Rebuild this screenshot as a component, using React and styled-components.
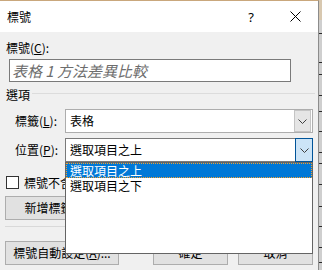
import React from 'react';
import styled, { createGlobalStyle } from 'styled-components';

const GlobalStyle = createGlobalStyle`
  html, body {
    margin: 0;
    padding: 0;
    background: #f0f0f0;
  }
`;

const Screen = styled.div`
  display: flex;
  width: 322px;
  height: 270px;
  overflow: hidden;
  font-family: 'Noto Sans CJK TC', 'Noto Sans', sans-serif;
  font-size: 12px;
  color: #000;
`;

const Dialog = styled.div`
  position: relative;
  display: flex;
  flex-direction: column;
  width: 319px;
  flex-shrink: 0;
  box-sizing: border-box;
  border-top: 1px solid #c9a77c;
  border-right: 1px solid #8c8c8c;
  background: #f0f0f0;
`;

const TitleBar = styled.div`
  display: flex;
  align-items: center;
  height: 31px;
  flex-shrink: 0;
  background: #ffffff;
`;

const Title = styled.span`
  flex: 1;
  padding-left: 7px;
  line-height: 14px;
`;

const TitleButton = styled.div`
  display: flex;
  align-items: center;
  justify-content: center;
  width: ${(p) => p.$w}px;
  height: 31px;
  font-family: 'Noto Sans', sans-serif;
  font-size: 13px;
`;

const Body = styled.div`
  display: flex;
  flex-direction: column;
  flex: 1;
  padding: 9px 5px 0 5px;
`;

const FieldLabel = styled.div`
  padding-left: 1px;
  line-height: 14px;
`;

const CaptionInput = styled.input`
  width: 282px;
  height: 23px;
  margin: 4px 0 0 4px;
  padding: 0 2px;
  box-sizing: border-box;
  border: 1px solid #7a7a7a;
  background: #ffffff;
  font-family: 'Noto Sans CJK TC', sans-serif;
  font-size: 15px;
  font-style: italic;
  outline: none;
  &::placeholder {
    color: #6d6d6d;
  }
`;

const GroupHeader = styled.div`
  display: flex;
  margin-top: 6px;
  line-height: 14px;
  padding-left: 1px;
`;

const GroupLine = styled.div`
  flex: 1;
  height: 1px;
  margin: 5px -2px 0 2px;
  background: #dcdcdc;
`;

const Row = styled.div`
  display: flex;
  align-items: center;
  margin-top: ${(p) => p.$top}px;
`;

const RowLabel = styled.span`
  width: 60px;
  padding-left: 10px;
  box-sizing: border-box;
  line-height: 14px;
`;

const Combo = styled.div`
  position: relative;
  display: flex;
  align-items: ${(p) => (p.$open ? 'stretch' : 'center')};
  flex: 1;
  height: 24px;
  box-sizing: border-box;
  border: 1px solid ${(p) => (p.$open ? '#7a7a7a' : '#adadad')};
  background: #ffffff;
`;

const ComboText = styled.span`
  flex: 1;
  align-self: center;
  padding-left: 4px;
  line-height: 14px;
`;

const ComboButton = styled.div`
  display: flex;
  align-items: center;
  justify-content: center;
  box-sizing: border-box;
  width: ${(p) => (p.$open ? 18 : 17)}px;
  height: ${(p) => (p.$open ? 24 : 22)}px;
  margin: ${(p) => (p.$open ? '-1px -1px -1px 0' : '0 1px 0 0')};
  background: ${(p) => (p.$open ? '#cce4f7' : '#e5e5e5')};
  border: 1px solid ${(p) => (p.$open ? '#005499' : '#c4c4c4')};
`;

const DropList = styled.div`
  position: absolute;
  top: calc(100% + 1px);
  left: -1px;
  right: -1px;
  z-index: 10;
  height: 92px;
  box-sizing: border-box;
  border: 1px solid #646464;
  background: #ffffff;
`;

const DropItem = styled.div`
  height: 15px;
  padding-left: 4px;
  line-height: 15px;
  color: ${(p) => (p.$selected ? '#ffffff' : '#000000')};
  background: ${(p) => (p.$selected ? '#0078d7' : 'transparent')};
  outline: ${(p) => (p.$selected ? '1px dotted #f0a030' : 'none')};
  outline-offset: -1px;
`;

const CheckRow = styled.label`
  display: flex;
  align-items: center;
  gap: 5px;
  margin-top: 14px;
  padding-left: 1px;
  line-height: 13px;
`;

const CheckBox = styled.span`
  width: 13px;
  height: 13px;
  box-sizing: border-box;
  border: 1px solid #333333;
  background: #ffffff;
`;

const ButtonRow = styled.div`
  display: flex;
  gap: 10px;
  margin-top: ${(p) => p.$top}px;
`;

const Button = styled.button`
  width: ${(p) => p.$w}px;
  height: 24px;
  padding: 0;
  margin-left: ${(p) => (p.$push ? 'auto' : '0')};
  box-sizing: border-box;
  border: 1px solid #adadad;
  background: #e1e1e1;
  font-family: 'Noto Sans CJK TC', sans-serif;
  font-size: 12px;
  line-height: 14px;
  color: #000;
  white-space: nowrap;
`;

const Separator = styled.div`
  height: 1px;
  margin-top: 6px;
  background: #d9d9d9;
`;

const EdgeStrip = styled.svg`
  display: block;
  flex-shrink: 0;
`;

const Chevron = () => (
  <svg width="9" height="5" viewBox="0 0 9 5">
    <polyline points="0.5,0.5 4.5,4.5 8.5,0.5" fill="none" stroke="#404040" strokeWidth="1" />
  </svg>
);

const CloseIcon = () => (
  <svg width="11" height="11" viewBox="0 0 11 11">
    <path d="M0.5 0.5 L10.5 10.5 M10.5 0.5 L0.5 10.5" stroke="#000" strokeWidth="1" />
  </svg>
);

// tick marks of the window peeking out behind the dialog
const ticks = [33, 62, 74, 95, 111, 131, 152, 163, 184, 206, 226, 247, 262];

export default function App() {
  return (
    <>
      <GlobalStyle />
      <Screen>
        <Dialog>
          <TitleBar>
            <Title>標號</Title>
            <TitleButton $w={44}>?</TitleButton>
            <TitleButton $w={45}>
              <CloseIcon />
            </TitleButton>
          </TitleBar>

          <Body>
            <FieldLabel>
              標號(<u>C</u>):
            </FieldLabel>
            <CaptionInput readOnly placeholder="表格 1 方法差異比較" />

            <GroupHeader>
              <span>選項</span>
              <GroupLine />
            </GroupHeader>

            <Row $top={7}>
              <RowLabel>
                標籤(<u>L</u>):
              </RowLabel>
              <Combo>
                <ComboText>表格</ComboText>
                <ComboButton>
                  <Chevron />
                </ComboButton>
              </Combo>
            </Row>

            <Row $top={5}>
              <RowLabel>
                位置(<u>P</u>):
              </RowLabel>
              <Combo $open>
                <ComboText>選取項目之上</ComboText>
                <ComboButton $open>
                  <Chevron />
                </ComboButton>
                <DropList>
                  <DropItem $selected>選取項目之上</DropItem>
                  <DropItem>選取項目之下</DropItem>
                </DropList>
              </Combo>
            </Row>

            <CheckRow>
              <CheckBox />
              <span>標號不含標籤</span>
            </CheckRow>

            <ButtonRow $top={7}>
              <Button $w={114}>新增標籤(N)...</Button>
            </ButtonRow>

            <Separator />

            <ButtonRow $top={14}>
              <Button $w={114}>
                標號自動設定(<u>A</u>)...
              </Button>
              <Button $w={75} $push>
                確定
              </Button>
              <Button $w={75}>取消</Button>
            </ButtonRow>
          </Body>
        </Dialog>

        <EdgeStrip width="3" height="270" viewBox="0 0 3 270">
          <rect x="0" y="0" width="3" height="270" fill="#cfcfcf" />
          <rect x="0" y="0" width="3" height="20" fill="#d8c8b0" />
          {ticks.map((y) => (
            <rect key={y} x="0" y={y} width="3" height="1" fill="#2a2a2a" />
          ))}
        </EdgeStrip>
      </Screen>
    </>
  );
}
